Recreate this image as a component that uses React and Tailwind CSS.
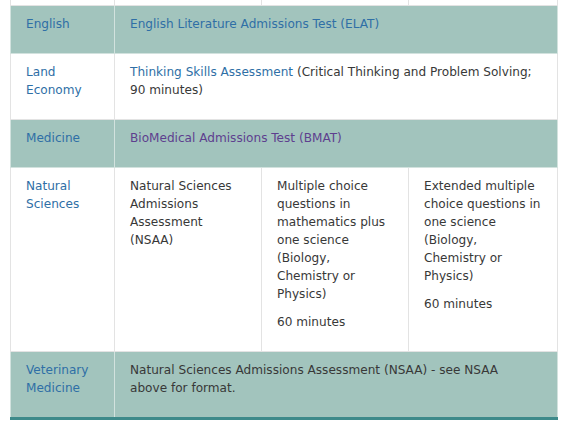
import React from "react";

const teal = "bg-[#a2c4bd]";

function Cell({ children, className = "border-[#e3e3e3]", pad = "pr-4", ...rest }) {
  return (
    <td
      {...rest}
      className={`align-top pl-[15px] ${pad} pt-[9px] pb-[10px] border ${className}`}
    >
      {children}
    </td>
  );
}

function P({ children }) {
  return <p className="mb-[10px]">{children}</p>;
}

function Link({ children, visited }) {
  return (
    <a className={visited ? "text-[#5e3f8f]" : "text-[#2f6fa6]"}>{children}</a>
  );
}

export default function App() {
  return (
    <div className="w-[568px] h-[429px] bg-white overflow-hidden pl-[10px] pr-[11px]">
      <table
        className="table-fixed w-[547px] border-collapse border-b-[3px] border-b-[#3e8a8a] text-[12.1px] leading-[18px] text-[#383838]"
        style={{ fontFamily: '"DejaVu Sans", Verdana, sans-serif' }}
      >
        <colgroup>
          <col className="w-[104px]" />
          <col className="w-[147px]" />
          <col className="w-[147px]" />
          <col className="w-[149px]" />
        </colgroup>
        <tbody>
          <tr className="h-[5px]">
            <td className="border border-t-0 border-[#e3e3e3] p-0"></td>
            <td className="border border-t-0 border-[#e3e3e3] p-0"></td>
            <td className="border border-t-0 border-[#e3e3e3] p-0"></td>
            <td className="border border-t-0 border-[#e3e3e3] p-0"></td>
          </tr>
          <tr className={teal}>
            <Cell className="border-[#d2e2de]">
              <P><Link>English</Link></P>
            </Cell>
            <Cell colSpan={3} pad="pr-[22px]" className="border-[#d2e2de]">
              <P><Link>English Literature Admissions Test (ELAT)</Link></P>
            </Cell>
          </tr>
          <tr>
            <Cell>
              <P><Link>Land Economy</Link></P>
            </Cell>
            <Cell colSpan={3} pad="pr-[22px]">
              <P>
                <Link>Thinking Skills Assessment</Link> (Critical Thinking and Problem Solving; 90 minutes)
              </P>
            </Cell>
          </tr>
          <tr className={teal}>
            <Cell className="border-[#d2e2de]">
              <P><Link>Medicine</Link></P>
            </Cell>
            <Cell colSpan={3} pad="pr-[22px]" className="border-[#d2e2de]">
              <P><Link visited>BioMedical Admissions Test (BMAT)</Link></P>
            </Cell>
          </tr>
          <tr>
            <Cell>
              <P><Link>Natural Sciences</Link></P>
            </Cell>
            <Cell>
              <P>Natural Sciences Admissions Assessment (NSAA)</P>
            </Cell>
            <Cell>
              <P>Multiple choice questions in mathematics plus one science (Biology, Chemistry or Physics)</P>
              <P>60 minutes</P>
            </Cell>
            <Cell>
              <P>Extended multiple choice questions in one science (Biology, Chemistry or Physics)</P>
              <P>60 minutes</P>
            </Cell>
          </tr>
          <tr className={teal}>
            <Cell className="border-[#d2e2de]">
              <P><Link>Veterinary Medicine</Link></P>
            </Cell>
            <Cell colSpan={3} pad="pr-[22px]" className="border-[#d2e2de]">
              <P>Natural Sciences Admissions Assessment (NSAA) - see NSAA above for format.</P>
            </Cell>
          </tr>
        </tbody>
      </table>
    </div>
  );
}
